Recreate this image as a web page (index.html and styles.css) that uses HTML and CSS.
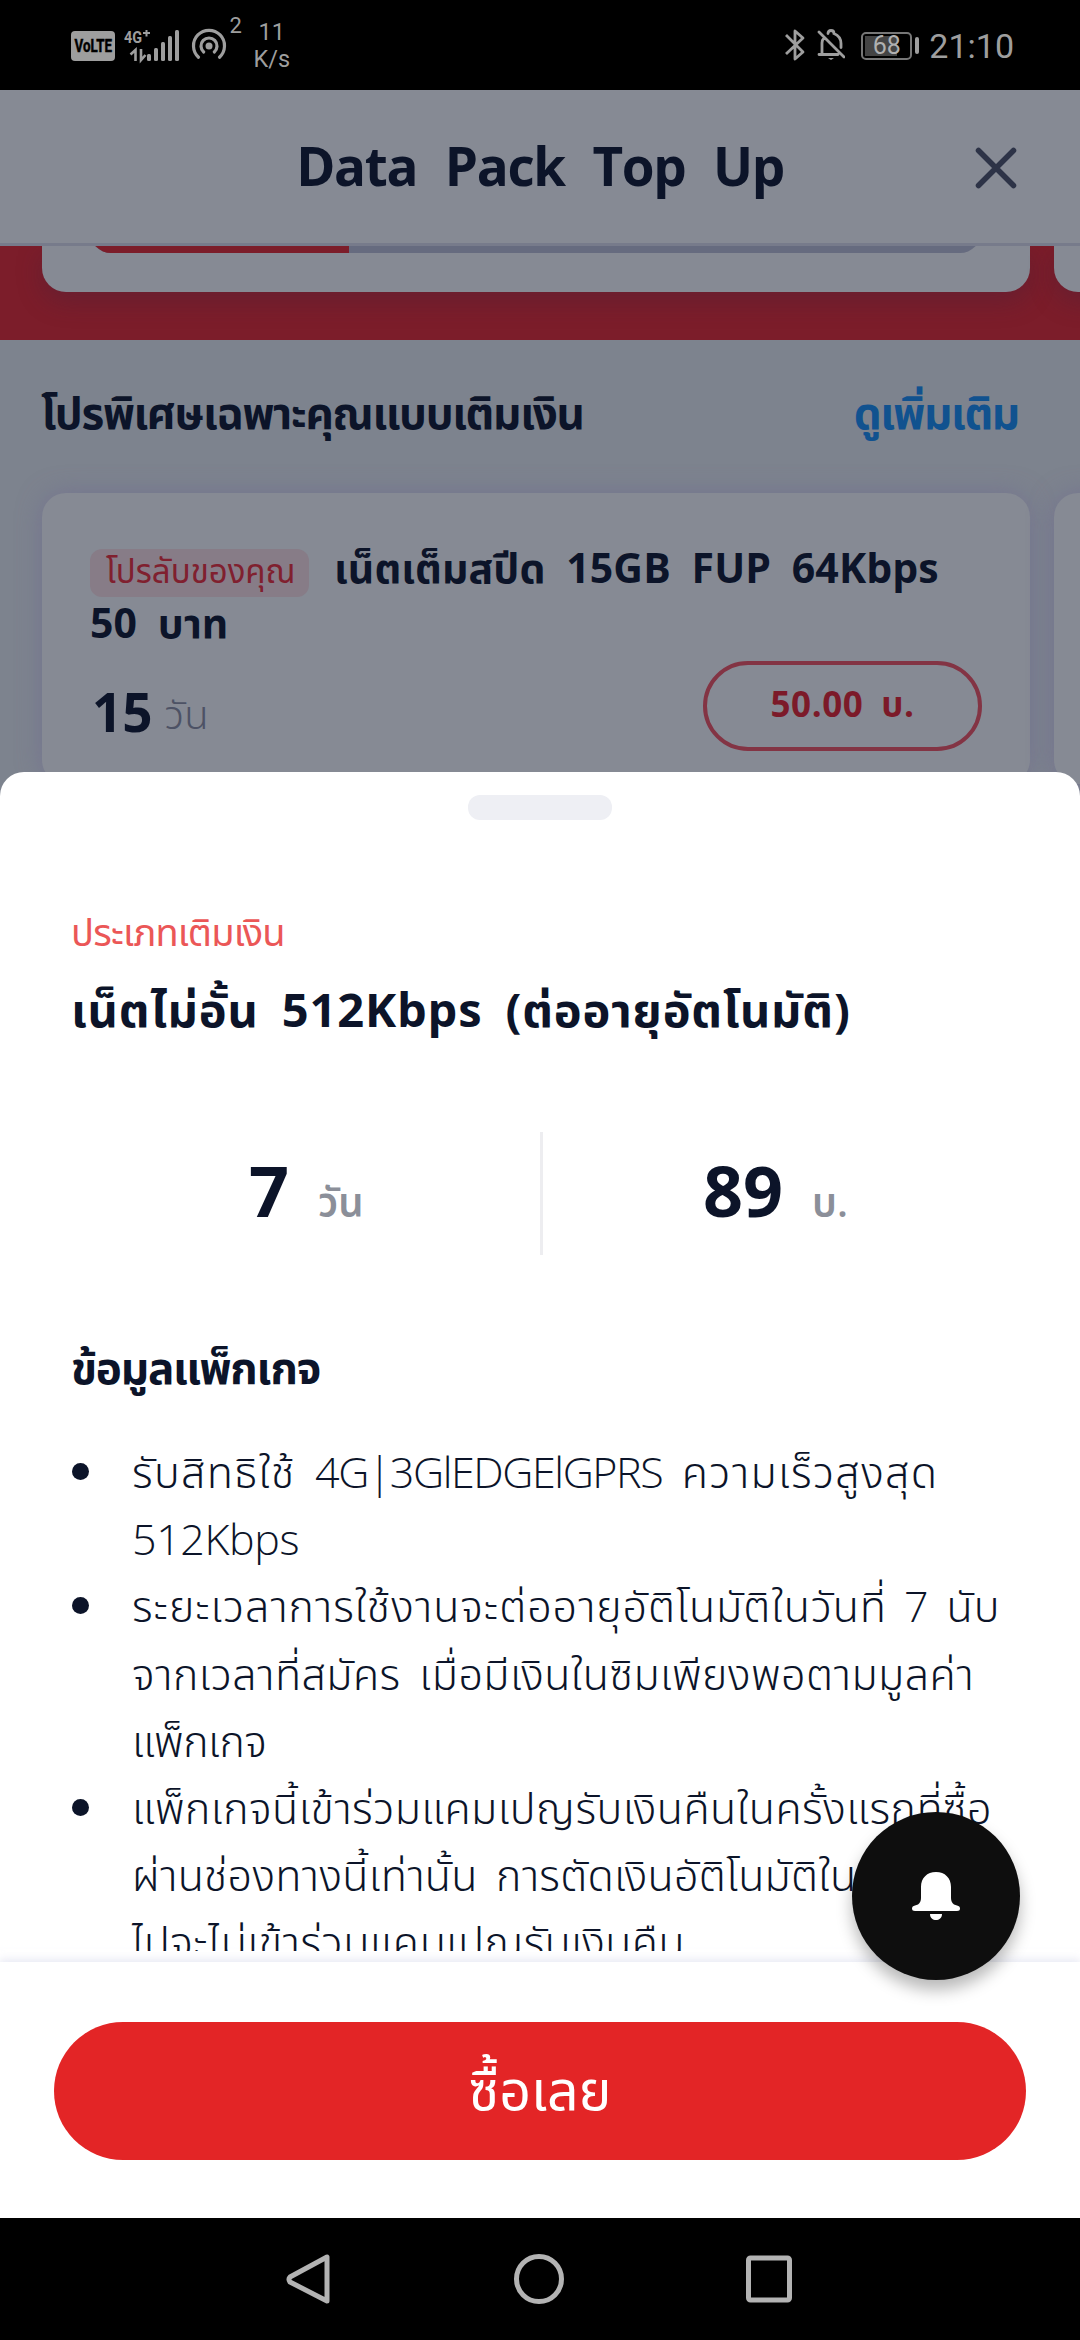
FILE: index.html
```html
<!DOCTYPE html>
<html lang="th">
<head>
<meta charset="utf-8">
<title>Data Pack Top Up</title>
<link rel="stylesheet" href="styles.css">
</head>
<body>
<header class="status">
  <div class="status-left">
    <span class="volte"><span>VoLTE</span></span>
    <span class="network">4G</span>
    <svg class="signal" width="56" height="32" viewBox="0 0 56 32" fill="#9e9e9e">
      <path d="M19 3h7M22.500 0v6.500" stroke="#9e9e9e" stroke-width="2"/>
      <path d="M6.500 24.500l5-4.500v11M17 19v11l4.500-5" fill="none" stroke="#9e9e9e" stroke-width="2.600"/>
      <rect x="23" y="24" width="4" height="7" rx="1.500"/><rect x="30" y="18" width="4" height="13" rx="1.500"/><rect x="37" y="12" width="4" height="19" rx="1.500"/><rect x="44" y="6" width="4" height="25" rx="1.500"/><rect x="51" y="0" width="4" height="31" rx="1.500"/>
    </svg>
    <svg class="hotspot" width="36" height="34" viewBox="0 0 36 34" fill="none" stroke="#9e9e9e" stroke-width="3.200" stroke-linecap="round">
      <circle cx="18" cy="18" r="3.500" fill="#9e9e9e" stroke="none"/>
      <path d="M12.700 24A8 8 0 1 1 23.300 24M7.500 29.200A15.500 15.500 0 1 1 28.500 29.200"/>
    </svg>
    <span class="count">2</span>
    <span class="speed">11<br>K/s</span>
  </div>
  <div class="status-right">
    <svg width="20" height="32" viewBox="0 0 20 32" fill="none" stroke="#9e9e9e" stroke-width="2.800" stroke-linejoin="round"><path d="M1 6l17 17-8 7V2l8 7L1 25"/></svg>
    <svg class="mute" width="28" height="32" viewBox="0 0 28 32" fill="none" stroke="#9e9e9e" stroke-width="2.800" stroke-linecap="round"><path d="M2 3l25 25M2 25.500h19M5 25V14q0-3 2-5M11 4.500q0-3 3-3t3 3q7 3 7 10v4"/><path d="M11 29h6l-3 2z" fill="#9e9e9e" stroke="none"/></svg>
    <span class="battery"><i class="charge"></i><b>68</b></span><i class="nub"></i>
    <span class="clock">21:10</span>
  </div>
</header>

<main class="app">
  <div class="topbar">
    <h1>Data Pack Top Up</h1>
    <svg class="close" width="42" height="42" viewBox="0 0 42 42" stroke="#2d3347" stroke-width="5.500" stroke-linecap="round"><path d="M3.500 3.500l35 35M38.500 3.500l-35 35"/></svg>
  </div>
  <section class="hero">
    <div class="usage"><div class="meter"><i></i></div></div>
    <div class="usage next"></div>
  </section>
  <section class="offers">
    <div class="offers-head"><h2>โปรพิเศษเฉพาะคุณแบบเติมเงิน</h2><a>ดูเพิ่มเติม</a></div>
    <div class="cards">
      <article class="card">
        <div class="card-line"><span class="tag"><span>โปรลับของคุณ</span></span><span class="pack">เน็ตเต็มสปีด 15GB FUP 64Kbps</span></div>
        <div class="card-line second"><span class="pack pack2">50 บาท</span></div>
        <div class="card-foot"><span class="days">15</span><span class="unit">วัน</span><span class="price"><span>50.00 บ.</span></span></div>
      </article>
      <article class="card next"></article>
    </div>
  </section>

  <section class="sheet">
    <div class="body">
      <i class="handle"></i>
      <p class="kind"><span>ประเภทเติมเงิน</span></p>
      <h2 class="name"><span>เน็ตไม่อั้น 512Kbps (ต่ออายุอัตโนมัติ)</span></h2>
      <div class="facts">
        <div class="fact"><b>7</b><span>วัน</span></div>
        <div class="fact fact2"><b>89</b><span>บ.</span></div>
      </div>
      <h3><span>ข้อมูลแพ็กเกจ</span></h3>
      <ul>
        <li><span class="l1">รับสิทธิใช้ <span class="latin">4G|3GlEDGElGPRS</span> ความเร็วสูงสุด</span><br><span class="l2">512Kbps</span></li>
        <li><span class="l3">ระยะเวลาการใช้งานจะต่ออายุอัติโนมัติในวันที่ 7 นับ</span><br><span class="l4">จากเวลาที่สมัคร เมื่อมีเงินในซิมเพียงพอตามมูลค่า</span><br><span class="l5">แพ็กเกจ</span></li>
        <li><span class="l4">แพ็กเกจนี้เข้าร่วมแคมเปญรับเงินคืนในครั้งแรกที่ซื้อ</span><br><span class="l7">ผ่านช่องทางนี้เท่านั้น การตัดเงินอัติโนมัติใน</span><br><span class="l8">ไปจะไม่เข้าร่วมแคมเปญรับเงินคืน</span></li>
      </ul>
    </div>
    <footer class="buybar"><button><span>ซื้อเลย</span></button></footer>
    <div class="fab"><svg width="48" height="48" viewBox="0 0 48 48" fill="#fff"><path d="M24 0C15 0 9 6 9 15v11c0 3-1 5-3 6.500L3 33.500Q0 34 0 36.500T3 39h42q3 0 3-2.500t-3-3l-3-1c-2-1.500-3-3.500-3-6.500V15C39 6 33 0 24 0zM18 42h12c0 4-3 6-6 6s-6-2-6-6z"/></svg></div>
  </section>
</main>

<nav class="nav">
  <svg width="46" height="52" viewBox="0 0 46 52"><path d="M41 4v44L4 29q-2-3 0-5z"/></svg>
  <svg width="52" height="52" viewBox="0 0 52 52"><circle cx="26" cy="26" r="22.500"/></svg>
  <svg width="46" height="52" viewBox="0 0 46 52"><rect x="2.500" y="5" width="41" height="42" rx="2"/></svg>
</nav>
</body>
</html>
```
FILE: styles.css
```css
* { box-sizing: border-box; margin: 0; padding: 0; }
body {
  width: 1080px; height: 2340px; overflow: hidden;
  display: flex; flex-direction: column;
  font-family: "Open Sans", "Noto Sans Thai", sans-serif;
  color: #0c1429; background: #000; white-space: nowrap;
}
svg { display: block; flex: none; }
i { display: block; }

.status { height: 90px; flex: none; display: flex; justify-content: space-between; padding: 0 66px 0 71px; color: #9e9e9e; font-family: Roboto, sans-serif; }
.status-left, .status-right { display: flex; align-items: flex-start; }
.volte { display: flex; justify-content: center; width: 44px; height: 30px; margin-top: 31px; border-radius: 4px; background: #9e9e9e; color: #000; font: 700 18px/29px Roboto, sans-serif; }
.volte span { flex: none; transform: scaleX(.74); -webkit-text-stroke: .5px #000; }
.network { width: 18px; margin: 27px 0 0 9px; font-weight: 700; font-size: 17px; line-height: 20px; transform: scaleX(.85); transform-origin: left; }
.signal { margin: 30px 0 0 -18px; overflow: visible; }
.hotspot { margin: 28px 0 0 10.500px; }
.count { font-size: 22px; line-height: 24px; margin: 14px 0 0 3px; width: 12px; }
.speed { font-size: 23.500px; line-height: 27px; margin: 19px 0 0 12px; text-align: center; }
.status-right svg { margin-top: 29px; }
.status-right .mute { margin-left: 12px; }
.battery { position: relative; width: 51px; height: 28px; margin: 32px 0 0 16px; border: 2px solid #777; border-radius: 5px; text-align: center; }
.charge { width: 32px; height: 20px; margin: 2px; background: #444; }
.battery b { position: absolute; inset: 0; font-size: 25px; font-weight: 400; line-height: 24px; color: #b0b0b0; }
.nub { width: 4px; height: 17px; margin: 37px 0 0 3px; border-radius: 2px; background: #9e9e9e; }
.clock { font-size: 34px; line-height: 40px; margin: 26px 0 0 10px; }

.app { position: relative; height: 2128px; flex: none; background: #7d838e; overflow: hidden; }
.topbar { height: 156px; background: #868a94; border-bottom: 3px solid #777b8b; display: flex; align-items: center; justify-content: flex-end; padding: 2px 63px 0 0; }
.topbar h1 { font-size: 53px; font-weight: 700; line-height: 60px; margin: -3px 191px 0 0; letter-spacing: -1.300px; word-spacing: 15px; }
.hero { height: 94px; background: #7c1d2a; display: flex; gap: 24px; padding-left: 42px; align-items: flex-start; overflow: hidden; }
.usage { width: 988px; height: 46px; flex: none; border-radius: 0 0 24px 24px; background: #868a94; padding: 0 49px 0 48px; box-shadow: 0 10px 24px rgba(70, 35, 60, .35); overflow: visible; }
.meter { height: 42px; margin-top: -35px; border-radius: 21px; background: #666b7f; overflow: hidden; }
.meter i { width: 259px; height: 42px; background: #7c1d2a; }
.offers-head { display: flex; justify-content: space-between; padding: 42px 61px 0 41px; height: 153px; line-height: 60px; }
.offers-head h2, .offers-head a { font-size: 44px; font-weight: 700; letter-spacing: -1.300px; }
.offers-head a { color: #11528f; }
.cards { display: flex; gap: 24px; padding-left: 42px; }
.card { width: 988px; height: 291px; flex: none; border-radius: 24px; background: #868a94; box-shadow: 0 0 24px rgba(110, 105, 145, .6); padding: 56px 48px 0; }
.card-line { display: flex; height: 48px; align-items: center; }
.card-line.second { height: 56px; }
.tag { width: 219px; height: 48px; margin-right: 25px; padding-left: 16px; border-radius: 12px; background: #877c87; color: #80202f; font-size: 33px; line-height: 44px; }
.pack { font-size: 41px; font-weight: 700; line-height: 36px; height: 36px; margin-top: -13px; letter-spacing: .100px; word-spacing: 10px; }
.pack2 { margin-top: -6px; }
.card-foot { display: flex; align-items: flex-start; margin-top: 8px; height: 90px; }
.days { font-size: 53px; font-weight: 700; line-height: 60px; margin: 21px 0 0 2px; }
.unit { font-size: 40px; font-weight: 300; line-height: 60px; margin: 23px 0 0 12px; color: #4d5265; }
.price { width: 279px; height: 90px; margin-left: auto; border: 4px solid #833444; border-radius: 45px; text-align: center; font-size: 35px; font-weight: 700; line-height: 78px; color: #7c1a29; letter-spacing: .600px; word-spacing: 8px; }

.sheet { position: absolute; left: 0; top: 682px; width: 1080px; height: 1446px; border-radius: 24px 24px 0 0; background: #fff; display: flex; flex-direction: column; }
.body { height: 1179px; padding: 23px 72px 0; overflow: hidden; flex: none; }
.handle { width: 144px; height: 25px; margin: 0 auto; border-radius: 12px; background: #eeeff4; }
.kind { margin: 81px 0 0 -1px; font-size: 38px; line-height: 60px; color: #eb5757; letter-spacing: -.800px; }
.name { margin: 13px 0 0 -1px; font-size: 47px; font-weight: 700; line-height: 70px; letter-spacing: .850px; word-spacing: 10px; }
.facts { display: flex; height: 123px; margin-top: 88px; }
.fact { width: 50%; display: flex; align-items: baseline; padding: 18px 0 0 177px; line-height: 80px; }
.fact2 { border-left: 3px solid #ededf0; padding-left: 160px; }
.fact b { font-size: 70px; font-weight: 700; }
.fact span { font-size: 40px; font-weight: 600; color: #8b8f99; margin-left: 29px; }
.body h3 { margin: 82px 0 0 -1px; font-size: 44px; font-weight: 700; line-height: 60px; letter-spacing: -1.200px; }
.body ul { list-style: none; margin-top: 41px; font-size: 43px; font-weight: 300; line-height: 67.200px; word-spacing: 7px; }
.body li { position: relative; padding-left: 60px; }
.body li::before { content: ""; position: absolute; left: 0; top: 25px; width: 17px; height: 17px; border-radius: 50%; background: #0c1429; }
.l1 { letter-spacing: 1.350px; }
.l1 .latin { letter-spacing: -1.400px; }
.l2 { letter-spacing: -.400px; }
.l3 { letter-spacing: .920px; word-spacing: 5px; }
.l4 { letter-spacing: .450px; }
.l5 { letter-spacing: -.500px; }
.l7 { letter-spacing: .200px; }
.l8 { letter-spacing: .450px; }
.buybar { margin-top: 11px; height: 256px; flex: none; padding: 60px 54px 0; background: #fff; box-shadow: 0 -3px 8px rgba(215, 217, 235, .55); }
.buybar button { display: block; width: 972px; height: 138px; border: 0; border-radius: 69px; background: #e32526; color: #fff; padding-bottom: 5px; font: 400 55.500px/133px "Open Sans", "Noto Sans Thai", sans-serif; }
.fab { position: absolute; left: 852px; top: 1040px; width: 168px; height: 168px; border-radius: 50%; background: #0e0e0e; display: flex; align-items: center; justify-content: center; box-shadow: 0 10px 16px rgba(0, 0, 0, .28); }

.nav { height: 122px; flex: none; display: flex; gap: 181px; padding: 35px 0 0 286px; }
.nav svg { fill: none; stroke: #b3b3b3; stroke-width: 5; stroke-linejoin: round; }
```
